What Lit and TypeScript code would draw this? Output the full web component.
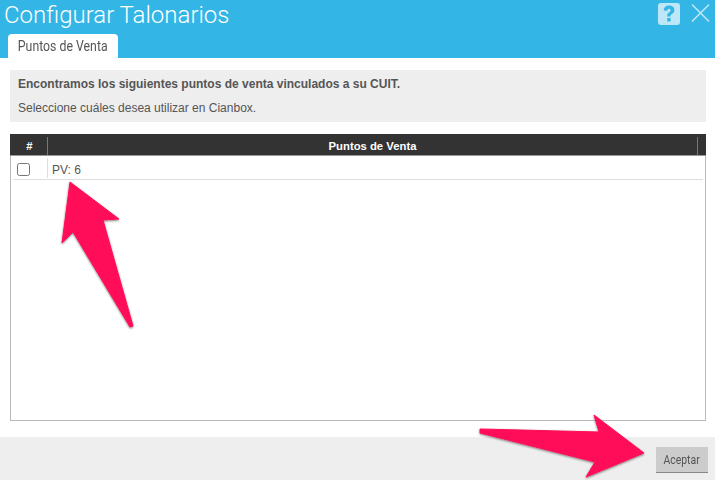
import { LitElement, html, css } from 'lit';
import { customElement } from 'lit/decorators.js';

@customElement('app-root')
export class AppRoot extends LitElement {
  static styles = css`
    :host {
      display: flex;
      flex-direction: column;
      position: relative;
      width: 715px;
      height: 480px;
      overflow: hidden;
      background: #fff;
      font-family: 'Liberation Sans', Arial, sans-serif;
      color: #555;
    }

    /* blue header with title and tab */
    .header {
      height: 58px;
      flex: none;
      background: #33b5e5;
      display: flex;
      flex-direction: column;
      justify-content: space-between;
      padding: 0 0 0 4px;
      box-sizing: border-box;
    }

    .title-row {
      display: flex;
      align-items: flex-start;
      justify-content: space-between;
    }

    .title {
      font-family: Roboto, sans-serif;
      font-weight: 300;
      font-size: 24px;
      line-height: 30px;
      color: #fff;
      white-space: nowrap;
    }

    .tools {
      display: flex;
      gap: 11px;
      padding: 3px 5px 0 0;
    }

    .tools svg {
      display: block;
    }

    .tab {
      align-self: flex-start;
      margin-left: 4px;
      width: 110px;
      height: 24px;
      background: #fff;
      border-radius: 4px 4px 0 0;
      display: flex;
      align-items: center;
      justify-content: center;
    }

    .tab span {
      display: inline-block;
      font-family: Roboto, sans-serif;
      font-size: 15px;
      color: #555;
      white-space: nowrap;
      transform: scaleX(0.82);
    }

    .content {
      flex: 1;
      display: flex;
      flex-direction: column;
      gap: 12px;
      padding: 12px 9px 16px 10px;
      min-height: 0;
    }

    .info {
      height: 52px;
      flex: none;
      box-sizing: border-box;
      background: #eee;
      padding: 7px 8px;
      font-size: 12px;
      line-height: 14px;
      display: flex;
      flex-direction: column;
      gap: 10px;
    }

    .info b {
      font-weight: 700;
    }

    .grid {
      flex: 1;
      display: flex;
      flex-direction: column;
      border: 1px solid #bbb;
      border-top: none;
      min-height: 0;
    }

    .grid-head {
      height: 22px;
      flex: none;
      margin: 0 -1px;
      box-sizing: border-box;
      background: #333;
      border-bottom: 1px solid #999;
      display: flex;
      align-items: center;
      padding-top: 2px;
      color: #fff;
      font-size: 11.3px;
      font-weight: 700;
    }

    .col-hash {
      width: 38px;
      height: 18px;
      line-height: 19px;
      padding-left: 2px;
      text-align: center;
      border-right: 1px solid #777;
      box-sizing: border-box;
    }

    .col-name {
      flex: 1;
      height: 18px;
      line-height: 19px;
      text-align: center;
      border-right: 1px solid #777;
      margin-right: 8px;
    }

    .row {
      height: 24px;
      margin: 0 2px;
      box-sizing: border-box;
      border-bottom: 1px solid #ddd;
      display: flex;
      align-items: center;
      font-size: 12px;
    }

    .cell-check {
      width: 35px;
      height: 20px;
      box-sizing: border-box;
      border-right: 1px solid #ddd;
      display: flex;
      align-items: center;
      padding-left: 4px;
    }

    .box {
      width: 13px;
      height: 13px;
      box-sizing: border-box;
      border: 1px solid #767676;
      border-radius: 2.5px;
      background: #fff;
      margin-top: 3px;
    }

    .cell-name {
      padding: 4px 0 0 4px;
    }

    .footer {
      height: 43px;
      flex: none;
      background: #eee;
      display: flex;
      justify-content: flex-end;
      align-items: flex-start;
      padding: 10px 7px 0 0;
      box-sizing: border-box;
    }

    .btn {
      width: 52px;
      height: 26px;
      background: #ccc;
      border-bottom: 1px solid #888;
      box-sizing: border-box;
      display: flex;
      align-items: center;
      justify-content: center;
    }

    .btn span {
      display: inline-block;
      font-family: Roboto, sans-serif;
      font-size: 13px;
      color: #555;
      transform: scaleX(0.8);
    }

    /* annotation arrows lying over the dialog */
    .arrows {
      position: absolute;
      inset: 0;
      pointer-events: none;
    }
  `;

  render() {
    return html`
      <div class="header">
        <div class="title-row">
          <div class="title">Configurar Talonarios</div>
          <div class="tools">
            <svg width="22" height="22" viewBox="0 0 22 22">
              <rect width="22" height="22" rx="3" fill="#bde7f7"></rect>
              <path d="M5.6 7.6C5.9 4.2 8 2.6 11 2.6c3.2 0 5.4 1.8 5.4 4.4 0 2-1.1 3-2.5 4-1.1.8-1.4 1.2-1.4 2.6H9.2c-.1-2.2.4-3.2 1.8-4.2 1-.8 1.6-1.2 1.6-2.2 0-.9-.6-1.5-1.6-1.5-1.1 0-1.7.7-1.8 2z" fill="#33b5e5"></path>
              <rect x="9.2" y="15" width="3.4" height="3.4" fill="#33b5e5"></rect>
            </svg>
            <svg width="19" height="20" viewBox="0 0 19 20">
              <path d="M1 1.5l17 17M18 1.5l-17 17" stroke="#bde7f7" stroke-width="1.6" fill="none"></path>
            </svg>
          </div>
        </div>
        <div class="tab"><span>Puntos de Venta</span></div>
      </div>

      <div class="content">
        <div class="info">
          <b>Encontramos los siguientes puntos de venta vinculados a su CUIT.</b>
          <span>Seleccione cuáles desea utilizar en Cianbox.</span>
        </div>
        <div class="grid">
          <div class="grid-head">
            <div class="col-hash">#</div>
            <div class="col-name">Puntos de Venta</div>
          </div>
          <div class="row">
            <div class="cell-check"><div class="box"></div></div>
            <div class="cell-name">PV: 6</div>
          </div>
        </div>
      </div>

      <div class="footer">
        <div class="btn"><span>Aceptar</span></div>
      </div>

      <svg class="arrows" width="715" height="480" viewBox="0 0 715 480">
        <defs>
          <filter id="sh" x="-20%" y="-20%" width="140%" height="140%">
            <feDropShadow dx="0" dy="1" stdDeviation="0.8" flood-color="#000" flood-opacity="0.5"></feDropShadow>
          </filter>
        </defs>
        <path filter="url(#sh)" fill="#ff1158" stroke="#ff1158" stroke-width="1" stroke-linejoin="round"
          d="M70 182L119 219L103 220L133 326L130 327L73 232L62 243Z"></path>
        <path filter="url(#sh)" fill="#ff1158" stroke="#ff1158" stroke-width="1" stroke-linejoin="round"
          d="M480 429L599 432L594 415L644 453L586 477L595 462L480 433Z"></path>
      </svg>
    `;
  }
}
